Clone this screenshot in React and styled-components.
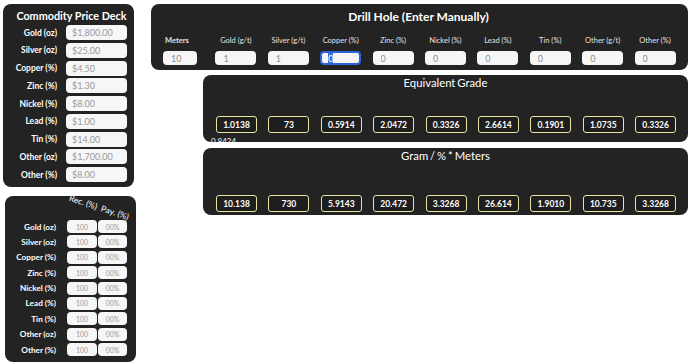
import React, { useEffect, useRef } from 'react'
import styled, { createGlobalStyle } from 'styled-components'

const GlobalStyle = createGlobalStyle`
  body {
    margin: 0;
    background: #ffffff;
    font-family: Lato, "Open Sans", sans-serif;
  }
`

const Page = styled.div`
  display: flex;
  align-items: flex-start;
  gap: 15px;
  padding: 4px 2px 0 3px;
  width: 690px;
  box-sizing: border-box;
`

const LeftCol = styled.div`
  display: flex;
  flex-direction: column;
  gap: 9px;
  width: 133px;
  flex: none;
`

const Panel = styled.div`
  background: #232323;
  border-radius: 8px;
  box-sizing: border-box;
`

const DeckPanel = styled(Panel)`
  width: 131px;
  padding: 3px 0 5px;
`

const DeckTitle = styled.div`
  color: #fff;
  font-weight: 700;
  font-size: 10.8px;
  line-height: 18px;
  text-align: center;
  padding-left: 6px;
  white-space: nowrap;
`

const DeckRows = styled.div`
  display: flex;
  flex-direction: column;
  gap: ${p => p.gap}px;
`

const DeckRow = styled.div`
  display: grid;
  grid-template-columns: ${p => p.cols};
  column-gap: ${p => p.colGap}px;
  align-items: center;
  height: ${p => p.h}px;
`

const RowLabel = styled.div`
  color: #fff;
  font-weight: 700;
  font-size: ${p => p.size}px;
  text-align: right;
  white-space: nowrap;
  margin-right: ${p => p.mr || 0}px;
`

const PriceInput = styled.input`
  box-sizing: border-box;
  width: 100%;
  height: ${p => p.h}px;
  border: none;
  border-radius: 4px;
  background: #f6f6f6;
  color: #9a9a9a;
  font-family: Lato, sans-serif;
  font-size: ${p => p.size}px;
  padding: 0 ${p => (p.center ? 0 : 6)}px;
  text-align: ${p => (p.center ? 'center' : 'left')};
  outline: none;
`

const RecoveryPanel = styled(Panel)`
  width: 131px;
  margin-left: 2px;
  padding: 0 0 6px;
`

const RecHeader = styled.div`
  display: grid;
  grid-template-columns: 61px 60px;
  column-gap: 1px;
  height: 24px;
  align-items: start;
`

const RecHeaderText = styled.div`
  grid-column: 2;
  color: #fff;
  font-size: 8.5px;
  line-height: 10px;
  white-space: nowrap;
  margin-top: -3px;
  margin-left: 4px;
  transform: rotate(18deg);
  transform-origin: left top;
`

const RightCol = styled.div`
  flex: 1;
  display: flex;
  flex-direction: column;
`

const DrillPanel = styled(Panel)`
  padding: 4px 0 5px 12px;
  height: 66px;
`

const DrillTitle = styled.div`
  color: #fff;
  font-weight: 700;
  font-size: 12px;
  line-height: 18px;
  text-align: center;
  padding-right: 14px;
`

const ColGrid = styled.div`
  display: grid;
  grid-template-columns: repeat(${p => p.n}, 52.4px);
  margin-top: ${p => p.top || 0}px;
`

const ColLabel = styled.div`
  color: #e2e2e2;
  font-size: 7.5px;
  font-weight: ${p => (p.bold ? 700 : 400)};
  line-height: 10px;
  width: ${p => p.w}px;
  text-align: ${p => (p.bold ? 'left' : 'center')};
  padding-left: ${p => (p.bold ? 2 : 0)}px;
  white-space: nowrap;
`

const DrillInput = styled.input`
  box-sizing: border-box;
  width: ${p => p.w}px;
  height: 14px;
  border: ${p => (p.active ? '2px solid #2f63d8' : 'none')};
  border-radius: 4px;
  background: #f6f6f6;
  color: #8d8d8d;
  font-family: Lato, sans-serif;
  font-size: 9px;
  padding: 0 ${p => (p.active ? 6 : 8)}px;
  outline: none;
  &::selection {
    background: #3b6fe0;
    color: #fff;
  }
`

const ResultPanel = styled(Panel)`
  margin-left: 52px;
  margin-top: ${p => p.top}px;
  height: 67px;
  padding-left: 13px;
`

const ResultTitle = styled.div`
  color: #fff;
  font-size: 11.3px;
  line-height: 16px;
  text-align: center;
  padding-right: 13px;
  word-spacing: -1px;
`

const ResultBox = styled.input`
  box-sizing: border-box;
  width: 41px;
  height: 17px;
  border: 1.5px solid #ebe3a4;
  border-radius: 3px;
  background: #1e1e1e;
  color: #fff;
  font-family: Lato, sans-serif;
  font-weight: 700;
  font-size: 8.5px;
  text-align: center;
  padding: 0 3px;
  outline: none;
`

const Overflow = styled.div`
  color: #fff;
  font-size: 8px;
  line-height: 10px;
  margin-top: 3px;
  margin-left: -5px;
`

const prices = [
  ['Gold (oz)', '$1,800.00'],
  ['Silver (oz)', '$25.00'],
  ['Copper (%)', '$4.50'],
  ['Zinc (%)', '$1.30'],
  ['Nickel (%)', '$8.00'],
  ['Lead (%)', '$1.00'],
  ['Tin (%)', '$14.00'],
  ['Other (oz)', '$1,700.00'],
  ['Other (%)', '$8.00']
]

const drillCols = [
  ['Meters', '10'],
  ['Gold (g/t)', '1'],
  ['Silver (g/t)', '1'],
  ['Copper (%)', '0'],
  ['Zinc (%)', '0'],
  ['Nickel (%)', '0'],
  ['Lead (%)', '0'],
  ['Tin (%)', '0'],
  ['Other (g/t)', '0'],
  ['Other (%)', '0']
]

const equivalent = ['1.0138', '73', '0.5914', '2.0472', '0.3326', '2.6614', '0.1901', '1.0735', '0.3326']
const gramMeters = ['10.138', '730', '5.9143', '20.472', '3.3268', '26.614', '1.9010', '10.735', '3.3268']

export default function App () {
  const copperRef = useRef(null)

  useEffect(() => {
    if (copperRef.current) {
      copperRef.current.focus()
      copperRef.current.select()
    }
  }, [])

  return (
    <>
      <GlobalStyle />
      <Page>
        <LeftCol>
          <DeckPanel>
            <DeckTitle>Commodity Price Deck</DeckTitle>
            <DeckRows gap={2.75}>
              {prices.map(([label, value], i) => (
                <DeckRow key={i} cols='54px 61px' colGap={9} h={15}>
                  <RowLabel size={8.5}>{label}</RowLabel>
                  <PriceInput h={15} size={9} defaultValue={value} />
                </DeckRow>
              ))}
            </DeckRows>
          </DeckPanel>
          <RecoveryPanel>
            <RecHeader>
              <RecHeaderText>Rec. (%)&nbsp;&nbsp;Pay. (%)</RecHeaderText>
            </RecHeader>
            <DeckRows gap={2.4}>
              {prices.map(([label], i) => (
                <DeckRow key={i} cols='61px 30px 29px' colGap={1} h={13}>
                  <RowLabel size={8.2} mr={10}>{label}</RowLabel>
                  <PriceInput h={13} size={7} center defaultValue='100' />
                  <PriceInput h={13} size={7} center defaultValue='00%' />
                </DeckRow>
              ))}
            </DeckRows>
          </RecoveryPanel>
        </LeftCol>
        <RightCol>
          <DrillPanel>
            <DrillTitle>Drill Hole (Enter Manually)</DrillTitle>
            <ColGrid n={10} top={10}>
              {drillCols.map(([label], i) => (
                <ColLabel key={i} bold={i === 0} w={i === 0 ? 34 : 41}>{label}</ColLabel>
              ))}
            </ColGrid>
            <ColGrid n={10} top={5}>
              {drillCols.map(([label, value], i) => (
                <DrillInput
                  key={i}
                  w={i === 0 ? 34 : 41}
                  active={i === 3}
                  ref={i === 3 ? copperRef : undefined}
                  defaultValue={value}
                />
              ))}
            </ColGrid>
          </DrillPanel>
          <ResultPanel top={5}>
            <ResultTitle>Equivalent Grade</ResultTitle>
            <ColGrid n={9} top={25}>
              {equivalent.map((v, i) => <ResultBox key={i} readOnly value={v} />)}
            </ColGrid>
            <Overflow>0.8424</Overflow>
          </ResultPanel>
          <ResultPanel top={6}>
            <ResultTitle>Gram / % * Meters</ResultTitle>
            <ColGrid n={9} top={31}>
              {gramMeters.map((v, i) => <ResultBox key={i} readOnly value={v} />)}
            </ColGrid>
          </ResultPanel>
        </RightCol>
      </Page>
    </>
  )
}
